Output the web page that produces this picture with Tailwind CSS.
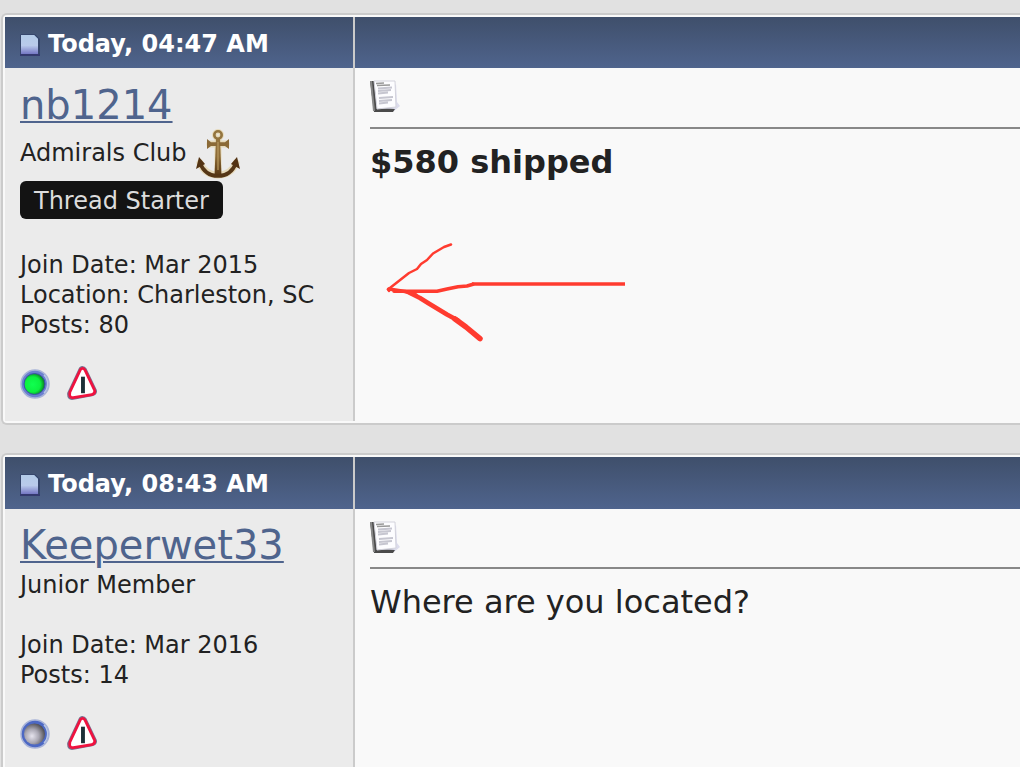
<!DOCTYPE html>
<html lang="en">
<head>
    <meta charset="UTF-8">
    <meta name="viewport" content="width=device-width, initial-scale=1.0">
    <title>Thread</title>
    <script src="https://cdn.jsdelivr.net/npm/@tailwindcss/browser@4"></script>
</head>
<body class="bg-[#e1e1e1] font-['Verdana','DejaVu_Sans',sans-serif] text-2xl/[30px] text-[#222] overflow-hidden">

    <!-- shared icons -->
    <svg class="absolute size-0" aria-hidden="true">
        <defs>
            <linearGradient id="pageFill" x1="0" y1="0" x2="0" y2="1">
                <stop offset="0" stop-color="#b3cbe8"/>
                <stop offset=".55" stop-color="#b9caeb"/>
                <stop offset="1" stop-color="#7577c4"/>
            </linearGradient>
            <radialGradient id="greenFill" cx=".42" cy=".52" r=".6">
                <stop offset="0" stop-color="#10ff50"/>
                <stop offset=".6" stop-color="#0cf040"/>
                <stop offset="1" stop-color="#0a6a20"/>
            </radialGradient>
            <radialGradient id="greyFill" cx=".38" cy=".6" r=".65">
                <stop offset="0" stop-color="#e6e4ee"/>
                <stop offset=".5" stop-color="#aaa8b4"/>
                <stop offset="1" stop-color="#4c4b50"/>
            </radialGradient>
            <linearGradient id="brass" x1="0" y1="0" x2="0" y2="1">
                <stop offset="0" stop-color="#94753f"/>
                <stop offset=".5" stop-color="#8b6a35"/>
                <stop offset="1" stop-color="#563614"/>
            </linearGradient>
            <symbol id="page" viewBox="0 0 20 22">
                <path d="M1 0H15L20 5V22H0V1z" fill="#36466c"/>
                <path d="M1 1H14L18 5V20H1z" fill="url(#pageFill)"/>
                <path d="M0 21H20" stroke="#35366f" stroke-width="1.5"/>
                <path d="M14 1 18 5" stroke="#8ba5c9"/>
            </symbol>
            <symbol id="note" viewBox="0 0 30 34">
                <path d="M26 5 27 23 30 27 24 32H6z" fill="#dcdcec"/>
                <path d="M0 2 5 2 7 29 25 30 23 33 4 33z" fill="#4a4a4a"/>
                <path d="M0 2 2 2 5 32 3 32z" fill="#888"/>
                <path d="M4 2 25 2 26 28 7 30z" fill="#fdfdff" stroke="#d3d3dc"/>
                <path d="M6 4.500 14 4M7 6.500 20 6" stroke="#999" stroke-width="1.500"/>
                <path d="M8 9.500 22 8.500M8 12 21 11M8 14.500 18 13.500M9 19 23 18M9 22 22 21M9 24.500 18 23.500" stroke="#c6c6d0" stroke-width="1.800"/>
            </symbol>
            <symbol id="warn" viewBox="0 0 32 36">
                <path d="M14 2.500Q17 0 19.500 3L30 25Q31 28.500 26 30L7 33.500Q1.500 34.500 2 28z" fill="#52466f" stroke="#52466f" stroke-width="2.500" stroke-linejoin="round" opacity=".75"/>
                <path d="M14.500 3.500Q17 1 19 4L29 25Q30 28 26 29.500L7 32.500Q2.500 33 3.500 27z" fill="#fff" stroke="#f0123f" stroke-width="2.800" stroke-linejoin="round"/>
                <path d="M17 11V28" stroke="#1c3037" stroke-width="4"/>
            </symbol>
            <symbol id="anchor" viewBox="0 0 46 52">
                <g fill="none" stroke="#e3cf9b" stroke-width="7" stroke-linecap="round" stroke-linejoin="round" opacity=".6">
                    <circle cx="23" cy="6" r="3.500" stroke-width="5"/>
                    <path d="M23 10V46M15 15H31"/>
                    <path d="M5 34Q10 46 23 46Q36 46 41 34"/>
                </g>
                <circle cx="23" cy="6" r="3.700" fill="none" stroke="#94753f" stroke-width="2.600"/>
                <path d="M21 9H25L26.500 47H19.500z" fill="url(#brass)"/>
                <path d="M12 10 16 13.300H30L34 10V20L30 17H16L12 20z" fill="#8b6a37"/>
                <path d="M5 34Q10 47 23 47Q36 47 41 34" fill="none" stroke="#563716" stroke-width="3.600"/>
                <path d="M4 28 10 35 1 40zM42 28 36 35 45 40z" fill="#533313"/>
                <path d="M23 13V41" stroke="#b99a61" stroke-width="1.200"/>
            </symbol>
        </defs>
    </svg>

    <main class="pt-[13px] pl-px space-y-7">

        <article class="border-2 border-r-0 border-[#cbcbcb] bg-[#f9f9f9] rounded-l-md p-0.5 pr-0">
            <header class="flex bg-linear-to-b from-[#3f4f6b] to-[#4f648d] text-white font-bold">
                <div class="w-[350px] shrink-0 border-r-2 border-[#cbcbcb] h-[51px] pt-0.5 pl-[15px] flex items-center gap-2">
                    <svg class="w-5 h-[22px] mt-0.5"><use href="#page"/></svg>
                    <time>Today, 04:47 AM</time>
                </div>
            </header>
            <div class="flex">
                <aside class="w-[350px] shrink-0 border-r-2 border-[#cbcbcb] bg-[#ebebeb] pl-[15px] pt-3 pb-5">
                    <a href="#" class="block w-fit text-[40px]/[50px] text-[#4f648d] underline decoration-2 underline-offset-2">nb1214</a>
                    <div class="flex gap-2 h-[51px]">
                        <p class="pt-2">Admirals Club</p>
                        <svg class="w-[46px] h-[52px] -mt-px shrink-0" role="img" aria-label="Admirals Club"><use href="#anchor"/></svg>
                    </div>
                    <p class="w-fit bg-[#131313] text-[#dcdcdc] rounded-md px-[14px] pt-[5px] pb-[3px]">Thread Starter</p>
                    <div class="mt-[31px]">
                        <p>Join Date: Mar 2015</p>
                        <p>Location: Charleston, SC</p>
                        <p>Posts: 80</p>
                    </div>
                    <div class="mt-[26px] flex items-center gap-4">
                        <svg class="size-[30px]" viewBox="0 0 30 30" role="img" aria-label="Online">
                            <circle cx="15" cy="15" r="14" fill="#6b7fd0" stroke="#a9b4d8" stroke-width="1.500"/>
                            <path d="M24 6A13 13 0 0 1 24 24" fill="none" stroke="#b9c8e6" stroke-width="1.500"/>
                            <circle cx="14.500" cy="15" r="10.500" fill="url(#greenFill)" stroke="#3c4fa8"/>
                        </svg>
                        <a href="#" aria-label="Report post"><svg class="w-8 h-[35px]"><use href="#warn"/></svg></a>
                    </div>
                </aside>
                <section class="relative grow pl-[15px] pt-[11px]">
                    <svg class="w-[30px] h-[34px]"><use href="#note"/></svg>
                    <hr class="mt-[14px] border-t-2 border-[#888]">
                    <p class="mt-[13px] text-[32px]/[40px] font-bold">$580 shipped</p>
                    <!-- hand drawn arrow -->
                    <svg class="absolute left-[25px] top-[170px] w-[250px] h-[110px]" viewBox="380 238 250 110" fill="none" stroke="#ff3b2f" stroke-linecap="round" stroke-linejoin="round">
                        <path d="M451 244.500 444 247 433 253.500 427 260 421 264 417 269 409 273 388 289.500" stroke-width="2.500"/>
                        <path d="M388 289 389 291" stroke-width="2.500"/>
                        <path d="M394 291.200H437L447 289 458 286.700 467 286 473 284.200" stroke-width="3.500"/>
                        <path d="M472 284H625" stroke-width="3.500" stroke-linecap="butt"/>
                        <path d="M389 289 405 291.500 416 295" stroke-width="3.500"/>
                        <path d="M410 293 420 298 428 303 447 314.500 458 320.500" stroke-width="4.500"/>
                        <path d="M455 319 466 327 480 338.700" stroke-width="5.500"/>
                    </svg>
                </section>
            </div>
        </article>

        <article class="border-2 border-r-0 border-[#cbcbcb] bg-[#f9f9f9] rounded-l-md p-0.5 pr-0">
            <header class="flex bg-linear-to-b from-[#3f4f6b] to-[#4f648d] text-white font-bold">
                <div class="w-[350px] shrink-0 border-r-2 border-[#cbcbcb] h-[52px] pt-0.5 pl-[15px] flex items-center gap-2">
                    <svg class="w-5 h-[22px] mt-0.5"><use href="#page"/></svg>
                    <time>Today, 08:43 AM</time>
                </div>
            </header>
            <div class="flex">
                <aside class="w-[350px] shrink-0 border-r-2 border-[#cbcbcb] bg-[#ebebeb] pl-[15px] pt-3 pb-5">
                    <a href="#" class="block w-fit text-[40px]/[49px] text-[#4f648d] underline decoration-2 underline-offset-2">Keeperwet33</a>
                    <p>Junior Member</p>
                    <div class="mt-[30px]">
                        <p>Join Date: Mar 2016</p>
                        <p>Posts: 14</p>
                    </div>
                    <div class="mt-[26px] flex items-center gap-4">
                        <svg class="size-[30px]" viewBox="0 0 30 30" role="img" aria-label="Offline">
                            <circle cx="15" cy="15" r="14" fill="#4c68c4" stroke="#a9b4d8" stroke-width="1.500"/>
                            <path d="M24 6A13 13 0 0 1 24 24" fill="none" stroke="#b9c8e6" stroke-width="1.500"/>
                            <circle cx="14.500" cy="15" r="10.500" fill="url(#greyFill)"/>
                        </svg>
                        <a href="#" aria-label="Report post"><svg class="w-8 h-[35px]"><use href="#warn"/></svg></a>
                    </div>
                </aside>
                <section class="grow pl-[15px] pt-[11px]">
                    <svg class="w-[30px] h-[34px]"><use href="#note"/></svg>
                    <hr class="mt-[13px] border-t-2 border-[#888]">
                    <p class="mt-[13px] text-[32px]/[40px]">Where are you located?</p>
                </section>
            </div>
        </article>

    </main>
</body>
</html>
